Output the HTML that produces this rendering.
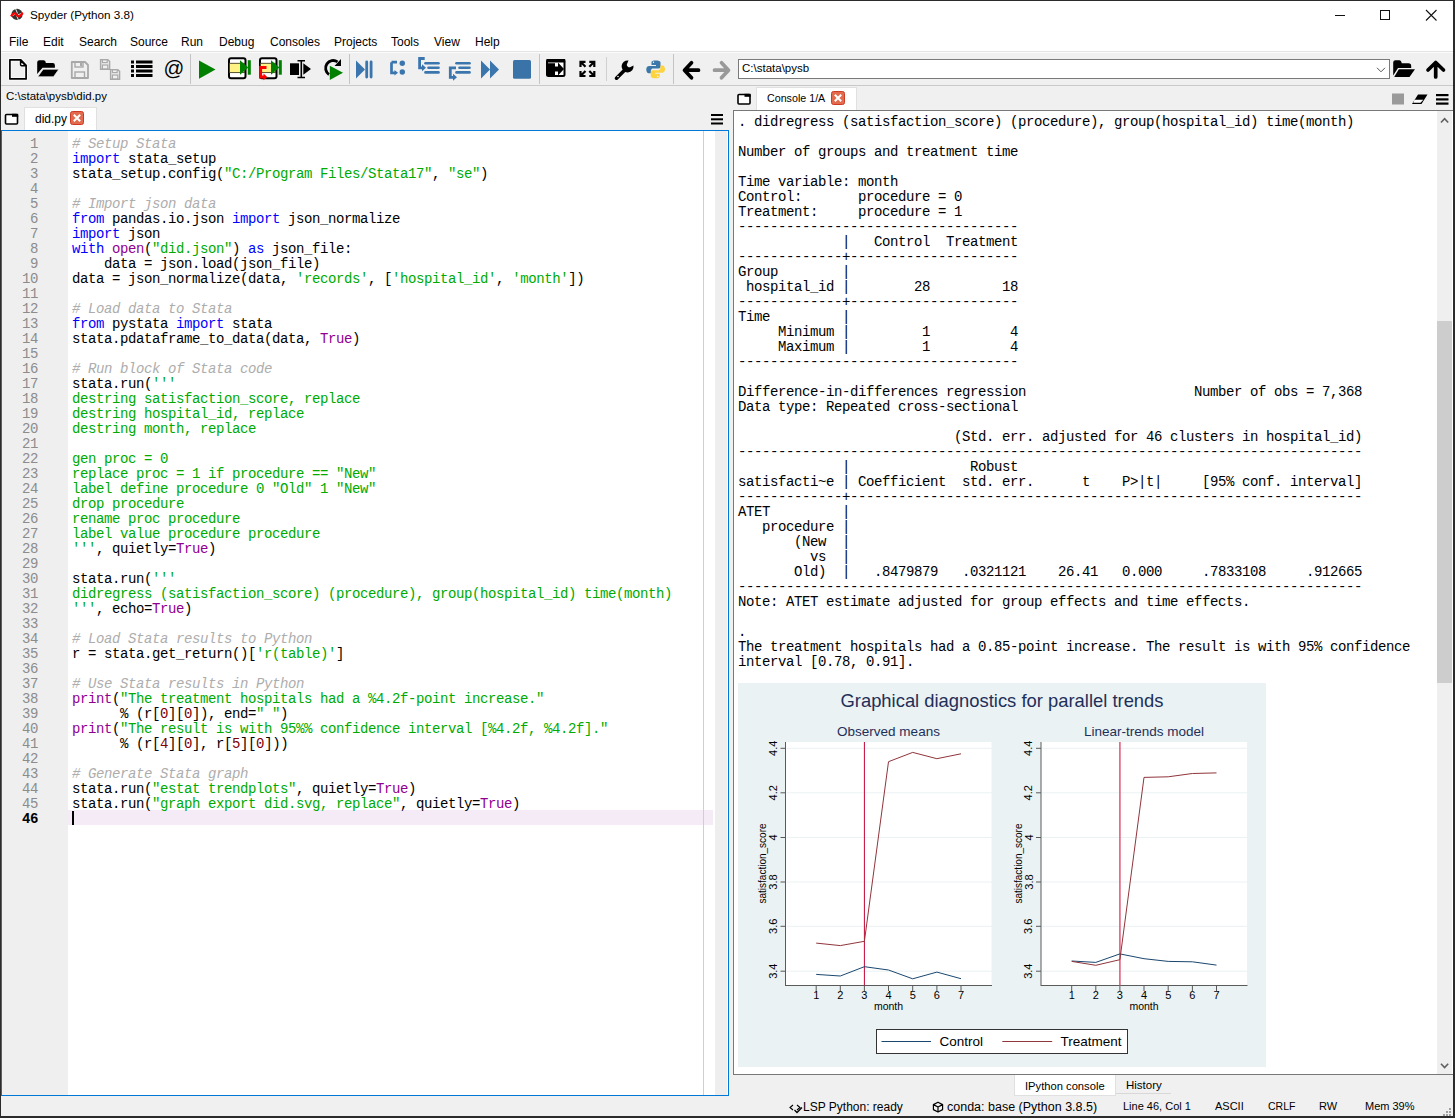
<!DOCTYPE html>
<html><head><meta charset="utf-8"><style>
html,body{margin:0;padding:0;}
body{width:1455px;height:1118px;overflow:hidden;background:#f0f0f0;font-family:"Liberation Sans",sans-serif;}
#win{position:absolute;left:0;top:0;width:1455px;height:1118px;background:#f0f0f0;}
.a{position:absolute;}
.t{position:absolute;white-space:pre;font-family:"Liberation Sans",sans-serif;color:#000;}
pre{margin:0;}
#titlebar{left:0;top:0;width:1455px;height:30px;background:#fff;}
#menubar{left:0;top:30px;width:1455px;height:22px;background:#fff;}
#toolbar{left:0;top:51px;width:1455px;height:34px;background:#f0f0f0;border-top:1px solid #e3e3e3;box-shadow:inset 0 1px 0 #fbfbfb;}
#tbline{left:0;top:85px;width:1455px;height:1px;background:#c9c9c9;}
.sep{position:absolute;width:1px;background:#c8c8c8;}
#editor{left:1px;top:130px;width:726px;height:964px;border:1px solid #0078d7;background:#fff;}
#gutbg{left:2px;top:131px;width:66px;height:964px;background:#efefef;}
#edge{left:703px;top:131px;width:1px;height:964px;background:#cfcfcf;}
#escroll{left:715px;top:131px;width:12px;height:964px;background:#eeeeee;}
#curline{position:absolute;left:68px;top:810px;width:645px;height:15px;background:#f5ebf7;}
#gut{position:absolute;left:2px;top:137px;width:36px;text-align:right;font-family:"Liberation Mono",monospace;font-size:14px;letter-spacing:-0.4px;line-height:15px;color:#8c8c8c;}
#gut b{color:#000;font-weight:bold;}
#code{position:absolute;left:72px;top:137px;font-family:"Liberation Mono",monospace;font-size:14px;letter-spacing:-0.4px;line-height:15px;color:#000;}
#code .k{color:#0000ff;}
#code .b{color:#900090;}
#code .s{color:#00aa00;}
#code .c{color:#adadad;font-style:italic;}
#code .n{color:#800000;}
#cursor{left:72px;top:811px;width:2px;height:14px;background:#000;}
#conbox{left:733px;top:110px;width:719px;height:963px;border:1px solid #787878;background:#fff;}
#con{position:absolute;left:738px;top:115px;font-family:"Liberation Mono",monospace;font-size:14px;letter-spacing:-0.4px;line-height:15px;color:#000;}
#cscroll{left:1437px;top:111px;width:15px;height:963px;background:#efefef;}
#cthumb{left:1437px;top:321px;width:15px;height:362px;background:#cdcdcd;}
#graph{position:absolute;left:738px;top:683px;width:528px;height:384px;}
#statusbar{left:0;top:1096px;width:1455px;height:21px;background:#f0f0f0;}
#frameL{left:0;top:0;width:1px;height:1118px;background:#2b2b2b;}
#frameT{left:0;top:0;width:1455px;height:1px;background:#2b2b2b;}
#frameR{left:1453px;top:0;width:2px;height:1118px;background:#2b2b2b;}
#frameB{left:0;top:1116px;width:1455px;height:2px;background:#2b2b2b;}

</style></head><body>
<div id="win">
<div class="a" id="titlebar"></div>
<div class="t" style="left:30px;top:8px;font-size:11.7px;">Spyder (Python 3.8)</div>
<div class="a" id="menubar"></div>
<div class="t" style="left:9px;top:35px;font-size:12px;">File</div>
<div class="t" style="left:43px;top:35px;font-size:12px;">Edit</div>
<div class="t" style="left:79px;top:35px;font-size:12px;">Search</div>
<div class="t" style="left:130px;top:35px;font-size:12px;">Source</div>
<div class="t" style="left:181px;top:35px;font-size:12px;">Run</div>
<div class="t" style="left:219px;top:35px;font-size:12px;">Debug</div>
<div class="t" style="left:270px;top:35px;font-size:12px;">Consoles</div>
<div class="t" style="left:334px;top:35px;font-size:12px;">Projects</div>
<div class="t" style="left:391px;top:35px;font-size:12px;">Tools</div>
<div class="t" style="left:434px;top:35px;font-size:12px;">View</div>
<div class="t" style="left:475px;top:35px;font-size:12px;">Help</div>
<div class="a" id="toolbar"></div>
<div class="a" id="tbline"></div>
<div class="a" id="editor"></div>
<div class="a" id="gutbg"></div>
<div id="curline"></div>
<div class="a" id="edge"></div>
<div class="a" id="escroll"></div>
<div class="a" id="conbox"></div>
<div class="a" id="cscroll"></div>
<div class="a" id="cthumb"></div>
<div class="a" id="statusbar"></div>
<div class="t" style="left:6px;top:90px;font-size:11.5px;">C:\stata\pysb\did.py</div>
<div class="a" style="left:24px;top:107px;width:73px;height:23px;background:#fff;border:1px solid #e0e0e0;border-bottom:none;box-sizing:border-box;"></div>
<div class="t" style="left:35px;top:112px;font-size:12px;">did.py</div>
<div class="a" style="left:756px;top:87px;width:101px;height:23px;background:#fff;border:1px solid #e0e0e0;border-bottom:none;box-sizing:border-box;"></div>
<div class="t" style="left:767px;top:92px;font-size:10.7px;">Console 1/A</div>
<div class="a" style="left:1014px;top:1075px;width:102px;height:21px;background:#fff;border:1px solid #e0e0e0;border-top:none;box-sizing:border-box;"></div>
<div class="t" style="left:1025px;top:1080px;font-size:11.2px;">IPython console</div>
<div class="t" style="left:1126px;top:1079px;font-size:11.5px;">History</div>
<div class="a" style="left:1116px;top:1093px;width:55px;height:1px;background:#d8d8d8;"></div>
<div class="t" style="left:803px;top:1100px;font-size:12px;">LSP Python: ready</div>
<div class="t" style="left:947px;top:1100px;font-size:12.5px;">conda: base (Python 3.8.5)</div>
<div class="t" style="left:1123px;top:1100px;font-size:11px;">Line 46, Col 1</div>
<div class="t" style="left:1215px;top:1100px;font-size:11px;">ASCII</div>
<div class="t" style="left:1268px;top:1100px;font-size:10.5px;">CRLF</div>
<div class="t" style="left:1319px;top:1100px;font-size:11px;">RW</div>
<div class="t" style="left:1365px;top:1100px;font-size:11px;">Mem 39%</div>
<svg class="a" style="left:0;top:0" width="1455" height="130">
<!-- spyder logo -->
<g transform="translate(17,14.4)">
<circle r="5.6" fill="#333"/>
<path d="M-1.5,-5.8 L0.5,-1 M5.5,-1.5 L1,0.5 M1.5,5.8 L-0.5,1 M-5.5,1.5 L-1,-0.5" stroke="#fff" stroke-width="0.9"/>
<path d="M-6,2 C-4,-1 -2.5,-2 -1,0 C0.5,2 2,2.5 3.5,1 C4.5,0 5,-1 6,-1.5" stroke="#f00" stroke-width="2.2" fill="none"/>
</g>
<!-- window controls -->
<line x1="1335" y1="15.5" x2="1345" y2="15.5" stroke="#111" stroke-width="1"/>
<rect x="1380.5" y="10.5" width="9" height="9" fill="none" stroke="#111" stroke-width="1"/>
<path d="M1426,10 L1436.5,20.5 M1436.5,10 L1426,20.5" stroke="#111" stroke-width="1.1"/>
<!-- separators -->
<rect x="190" y="54" width="1" height="30" fill="#c4c4c4"/>
<rect x="349" y="54" width="1" height="30" fill="#c4c4c4"/>
<rect x="539" y="54" width="1" height="30" fill="#c4c4c4"/>
<rect x="606" y="57" width="1" height="24" fill="#d0d0d0"/>
<rect x="673" y="54" width="1" height="30" fill="#c4c4c4"/>
<!-- 1 new file -->
<path d="M9.9,59.8 H20.8 L26.1,65.3 V78.9 H9.9 Z" fill="none" stroke="#fff" stroke-width="3.4" stroke-linejoin="round" opacity="0.8"/>
<path d="M9.9,59.8 H20.8 L26.1,65.3 V78.9 H9.9 Z" fill="none" stroke="#000" stroke-width="1.7" stroke-linejoin="round"/>
<path d="M20.6,60.5 V64.8 Q20.6,65.8 21.6,65.8 H25.6 Z" fill="#fff" stroke="#000" stroke-width="1.5" stroke-linejoin="round"/>
<!-- 2 open folder -->
<path d="M37.2,62.2 Q37.2,60.2 39.5,60.2 H43.5 Q45.6,60.2 45.8,63 H52.8 Q54.9,63 54.9,65.2 V67.8 H42.5 L37.2,74 Z" fill="#000"/>
<path d="M43.2,69.3 H58.8 L53.5,76.7 H37.8 Z" fill="#000" stroke="#fff" stroke-width="0.6"/>
<!-- 3 save (disabled) -->
<path d="M71.8,62 H85 L88,65 V78 H71.8 Z" fill="none" stroke="#a9a9a9" stroke-width="1.8" stroke-linejoin="round"/>
<rect x="75" y="62" width="8" height="5" fill="none" stroke="#a9a9a9" stroke-width="1.4"/>
<rect x="80" y="63" width="2" height="3" fill="#a9a9a9"/>
<rect x="75" y="72" width="9.5" height="6" fill="none" stroke="#a9a9a9" stroke-width="1.4"/>
<!-- 4 save all -->
<g transform="translate(100,59) scale(0.6)">
<path d="M1,1 H13 L16,4 V17 H1 Z" fill="none" stroke="#a9a9a9" stroke-width="2.4"/>
<rect x="4" y="1" width="8" height="5" fill="none" stroke="#a9a9a9" stroke-width="2"/>
<rect x="4" y="10" width="9" height="7" fill="none" stroke="#a9a9a9" stroke-width="2"/>
</g>
<g transform="translate(110,69) scale(0.6)">
<path d="M1,1 H13 L16,4 V17 H1 Z" fill="#f0f0f0" stroke="#a9a9a9" stroke-width="2.4"/>
<rect x="4" y="1" width="8" height="5" fill="none" stroke="#a9a9a9" stroke-width="2"/>
<rect x="4" y="10" width="9" height="7" fill="none" stroke="#a9a9a9" stroke-width="2"/>
</g>
<!-- 5 list -->
<g fill="#000">
<rect x="131" y="60.5" width="3" height="3"/><rect x="136" y="60.5" width="16.5" height="3"/>
<rect x="131" y="65" width="3" height="3"/><rect x="136" y="65" width="16.5" height="3"/>
<rect x="131" y="69.5" width="3" height="3"/><rect x="136" y="69.5" width="16.5" height="3"/>
<rect x="131" y="74" width="3" height="3"/><rect x="136" y="74" width="16.5" height="3"/>
</g>
<!-- 6 @ -->
<text x="163.5" y="75" font-family="Liberation Sans" font-size="20.5" fill="#000">@</text>
<!-- 7 play -->
<path d="M199,60.5 L215.5,69.5 L199,78.8 Z" fill="#008000"/>
<!-- 8 run cell -->
<rect x="229" y="58.3" width="16.5" height="20" rx="2" fill="#fff" stroke="#000" stroke-width="2"/>
<rect x="229.5" y="63.3" width="15" height="9.3" fill="#fff385" stroke="#463c20" stroke-width="0.9"/>
<path d="M240,60.3 L248.3,67.5 L240,74.7 Z" fill="#008000"/>
<rect x="247.8" y="60.2" width="3" height="14.5" fill="#008000"/>
<!-- 9 run cell advance -->
<rect x="260" y="58.3" width="16.5" height="20" rx="2" fill="#fff" stroke="#000" stroke-width="2"/>
<rect x="260.5" y="63.3" width="15" height="9.3" fill="#fff385" stroke="#463c20" stroke-width="0.9"/>
<path d="M271,60.3 L279.3,67.5 L271,74.7 Z" fill="#008000"/>
<rect x="278.8" y="60.2" width="3" height="14.5" fill="#008000"/>
<path d="M266.5,67.5 H260.6 V77 H264" fill="none" stroke="#ff0000" stroke-width="3"/>
<path d="M263.5,73.5 L267.3,77 L263.5,80.3 Z" fill="#ff0000"/>
<!-- 10 run selection -->
<rect x="290" y="63.3" width="9" height="11.7" fill="#000"/>
<path d="M297.5,60.8 H305 M301.3,60.8 V77.5 M297.5,77.5 H305" stroke="#000" stroke-width="1.6" fill="none"/>
<path d="M303.3,63.3 L311,69 L303.3,74.7 Z" fill="#000"/>
<!-- 11 re-run -->
<path d="M337.5,61.8 A7.2,7.2 0 1 0 329,74.5" fill="none" stroke="#000" stroke-width="2.8"/>
<path d="M341,59 L341,66 L334.5,66 Z" fill="#000"/>
<path d="M329.8,65.7 L343,72.8 L329.8,80 Z" fill="#008000"/>
<!-- 12 debug -->
<g fill="#3a75ae">
<path d="M356,60.5 L365,69.5 L356,78.5 Z"/>
<rect x="365.3" y="60.5" width="2.8" height="18" rx="1.4"/>
<rect x="369.7" y="60.5" width="2.8" height="18" rx="1.4"/>
</g>
<!-- 13 debug step -->
<g fill="#3a75ae" stroke="none">
<path d="M391.5,62.2 H397 M391.5,62.2 V72.8 H395" stroke="#3a75ae" stroke-width="2.7" fill="none"/>
<path d="M394.5,70 L398,72.8 L394.5,75.6 Z"/>
<circle cx="402.3" cy="63.3" r="2.7"/>
<circle cx="402.3" cy="72" r="2.7"/>
</g>
<!-- 14 step into -->
<g stroke="#3a75ae" fill="none" stroke-linecap="round">
<path d="M424.7,58.5 H419.6 V67.8 H423" stroke-width="2.8" stroke-linecap="butt"/>
<line x1="425.5" y1="63.2" x2="438.5" y2="63.2" stroke-width="2.6"/>
<line x1="428.5" y1="67.8" x2="438.5" y2="67.8" stroke-width="2.6"/>
<line x1="425.5" y1="72.4" x2="438.5" y2="72.4" stroke-width="2.6"/>
</g>
<path d="M422,64.3 L426,67.8 L422,71.3 Z" fill="#3a75ae"/>
<!-- 15 step return -->
<g stroke="#3a75ae" fill="none" stroke-linecap="round">
<path d="M456,67.8 H450.3 V77.3 H454" stroke-width="2.8" stroke-linecap="butt"/>
<line x1="456.5" y1="63.2" x2="469.5" y2="63.2" stroke-width="2.6"/>
<line x1="459.5" y1="67.8" x2="469.5" y2="67.8" stroke-width="2.6"/>
<line x1="456.5" y1="72.4" x2="469.5" y2="72.4" stroke-width="2.6"/>
</g>
<path d="M453,73.7 L457,77.3 L453,80.8 Z" fill="#3a75ae"/>
<!-- 16 continue -->
<path d="M481,60.5 L490,69.5 L481,78.5 Z M490,60.5 L499,69.5 L490,78.5 Z" fill="#3a75ae"/>
<!-- 17 stop -->
<rect x="513" y="60" width="18" height="18.7" rx="1.5" fill="#3a73a8"/>
<!-- 18 maximize pane -->
<rect x="547" y="60" width="17.5" height="16" rx="1.5" fill="#fff" stroke="#000" stroke-width="2"/>
<rect x="546.5" y="59" width="18.7" height="3.5" fill="#000"/>
<path d="M548,63.3 H555 V66.5 H558 V62.5 L564,69 L558,75.5 V71.5 H555 V75 H548 Z" fill="#000"/>
<!-- 19 fullscreen -->
<g stroke="#000" stroke-width="2.2" fill="none">
<path d="M580.5,67 V61.8 H585.5 M580.5,61.8 L585.5,66.8"/>
<path d="M594.3,67 V61.8 H589.3 M594.3,61.8 L589.3,66.8"/>
<path d="M580.5,71 V76 H585.5 M580.5,76 L585.5,71"/>
<path d="M594.3,71 V76 H589.3 M594.3,76 L589.3,71"/>
</g>
<!-- 20 wrench -->
<path d="M616.5,78.2 L626.5,68.2" stroke="#000" stroke-width="3.6" stroke-linecap="round"/>
<path d="M633.5,65.5 A6,6 0 1 1 628.5,60.5 L626.8,64.5 A2.8,2.8 0 0 0 630,67.3 Z" fill="#000"/>
<circle cx="618" cy="76.5" r="0.8" fill="#fff"/>
<!-- 21 python -->
<path d="M655.5,60.5 C651,60.5 651.5,62.5 651.5,62.5 V65 H656 V66 H649 C646.5,66 646.3,69 646.3,69.5 C646.3,73 648.5,73.3 649,73.3 H650.8 V70.8 C650.8,69 652.5,68.5 653,68.5 H658.5 C660,68.5 660.5,67.5 660.5,66.5 V62.5 C660.5,61 658.5,60.5 655.5,60.5 Z" fill="#3b77a8"/>
<path d="M655.8,78.2 C660.3,78.2 659.8,76.2 659.8,76.2 V73.7 H655.3 V72.7 H662.3 C664.8,72.7 665,69.7 665,69.2 C665,65.7 662.8,65.4 662.3,65.4 H660.5 V67.9 C660.5,69.7 658.8,70.2 658.3,70.2 H652.8 C651.3,70.2 650.8,71.2 650.8,72.2 V76.2 C650.8,77.7 652.8,78.2 655.8,78.2 Z" fill="#fdd33f"/>
<circle cx="653.5" cy="62.3" r="0.7" fill="#fff"/><circle cx="657.8" cy="76.4" r="0.7" fill="#fff"/>
<!-- 22 back -->
<g stroke="#000" stroke-width="3.7" fill="none" stroke-linecap="round" stroke-linejoin="round">
<path d="M691.5,62.8 L684.5,70.2 L691.5,77.8 M685,70.2 H698.5"/>
</g>
<!-- 23 forward -->
<g stroke="#999" stroke-width="3.7" fill="none" stroke-linecap="round" stroke-linejoin="round">
<path d="M721.5,62.8 L728.5,70.2 L721.5,77.8 M728,70.2 H714.5"/>
</g>
<!-- combobox -->
<rect x="738.5" y="59.5" width="651" height="19" fill="#fff" stroke="#7a7a7a" stroke-width="1"/>
<path d="M1377,67.8 L1381,71.8 L1385,67.8" stroke="#555" stroke-width="1" fill="none"/>
<!-- 24 folder -->
<path d="M1393.2,62.5 Q1393.2,60.3 1395.5,60.3 H1399.5 Q1401.3,60.3 1401.8,63.2 H1408.5 Q1411.2,63.2 1411.2,66 V68 H1398 L1393.2,75.5 Z" fill="#000"/>
<path d="M1398.8,69.3 H1415 L1409.5,76.9 H1394.2 Z" fill="#000"/>
<!-- 25 up -->
<g stroke="#000" stroke-width="3.7" fill="none" stroke-linecap="round" stroke-linejoin="round">
<path d="M1428,70 L1435.7,62.5 L1443.5,70 M1435.7,63 V77"/>
</g>
<!-- editor tab bar icons -->
<rect x="5.5" y="114.5" width="12" height="9.5" rx="1" fill="#fff" stroke="#000" stroke-width="1.6"/>
<rect x="12" y="113.8" width="6.2" height="3" fill="#000"/>
<!-- close icons -->
<rect x="70.5" y="111.5" width="13" height="13" rx="2" fill="#e36a4d" stroke="#cc3b24" stroke-width="1"/>
<path d="M73.8,114.8 L80.2,121.2 M80.2,114.8 L73.8,121.2" stroke="#fff" stroke-width="2"/>
<!-- hamburger editor -->
<g fill="#000"><rect x="711" y="114" width="12" height="2"/><rect x="711" y="118.3" width="12" height="2"/><rect x="711" y="122.5" width="12" height="2"/></g>
<!-- console header -->
<rect x="738" y="94.5" width="12" height="9.5" rx="1" fill="#fff" stroke="#000" stroke-width="1.6"/>
<rect x="744.5" y="93.8" width="6.2" height="3" fill="#000"/>
<rect x="831.5" y="91.5" width="13" height="13" rx="2" fill="#e36a4d" stroke="#cc3b24" stroke-width="1"/>
<path d="M834.8,94.8 L841.2,101.2 M841.2,94.8 L834.8,101.2" stroke="#fff" stroke-width="2"/>
<rect x="1392" y="93.5" width="12" height="11" fill="#9a9a9a"/>
<path d="M1418,94.5 H1427.5 L1421.5,104 H1412 Z" fill="#000"/>
<path d="M1414.5,99.8 H1423.3 L1420.5,102.8 H1413.2 Z" fill="#fff"/>
<g fill="#000"><rect x="1436" y="94" width="12.5" height="2.2"/><rect x="1436" y="98.3" width="12.5" height="2.2"/><rect x="1436" y="102.5" width="12.5" height="2.2"/></g>
</svg>

<svg class="a" style="left:0;top:1060px" width="1455" height="58">
<path d="M793,45 L790,47.5 L793,50 M797,45 L800,47.5 L797,50" stroke="#000" stroke-width="1.1" fill="none"/>
<path d="M794.5,50 L797,52.5 L802,47.5" stroke="#000" stroke-width="1.3" fill="none"/>
<path d="M938,42.2 L942.6,44.6 V49.6 L938,52 L933.4,49.6 V44.6 Z M933.4,44.6 L938,47 L942.6,44.6 M938,47 V52" stroke="#000" stroke-width="1.2" fill="none" stroke-linejoin="round"/>
<g fill="#a0a0a0"><rect x="1443" y="54" width="2" height="2"/><rect x="1446" y="54" width="2" height="2"/><rect x="1449" y="54" width="2" height="2"/><rect x="1446" y="51" width="2" height="2"/><rect x="1449" y="51" width="2" height="2"/><rect x="1449" y="48" width="2" height="2"/></g>
<path d="M1441,3.8 L1444.6,7.6 L1448.2,3.8" stroke="#606060" stroke-width="1.6" fill="none"/>
</svg>
<svg class="a" style="left:1437px;top:111px" width="15" height="20"><path d="M4,11.5 L7.6,7.7 L11.2,11.5" stroke="#606060" stroke-width="1.6" fill="none"/></svg>

<div class="t" style="left:742px;top:62px;font-size:11.5px;">C:\stata\pysb</div>

<div class="a" id="frameL"></div><div class="a" id="frameT"></div><div class="a" id="frameR"></div><div class="a" id="frameB"></div>

<pre id="gut">1
2
3
4
5
6
7
8
9
10
11
12
13
14
15
16
17
18
19
20
21
22
23
24
25
26
27
28
29
30
31
32
33
34
35
36
37
38
39
40
41
42
43
44
45
<b>46</b></pre>
<div class="a" id="cursor"></div>
<pre id="code"><span class="c"># Setup Stata</span>
<span class="k">import</span> stata_setup
stata_setup.config(<span class="s">&quot;C:/Program Files/Stata17&quot;</span>, <span class="s">&quot;se&quot;</span>)

<span class="c"># Import json data</span>
<span class="k">from</span> pandas.io.json <span class="k">import</span> json_normalize
<span class="k">import</span> json
<span class="k">with</span> <span class="b">open</span>(<span class="s">&quot;did.json&quot;</span>) <span class="k">as</span> json_file:
    data = json.load(json_file)
data = json_normalize(data, <span class="s">&#x27;records&#x27;</span>, [<span class="s">&#x27;hospital_id&#x27;</span>, <span class="s">&#x27;month&#x27;</span>])

<span class="c"># Load data to Stata</span>
<span class="k">from</span> pystata <span class="k">import</span> stata
stata.pdataframe_to_data(data, <span class="b">True</span>)

<span class="c"># Run block of Stata code</span>
stata.run(<span class="s">&#x27;&#x27;&#x27;</span>
<span class="s">destring satisfaction_score, replace</span>
<span class="s">destring hospital_id, replace</span>
<span class="s">destring month, replace</span>
<span class="s"></span>
<span class="s">gen proc = 0</span>
<span class="s">replace proc = 1 if procedure == &quot;New&quot;</span>
<span class="s">label define procedure 0 &quot;Old&quot; 1 &quot;New&quot;</span>
<span class="s">drop procedure</span>
<span class="s">rename proc procedure</span>
<span class="s">label value procedure procedure</span>
<span class="s">&#x27;&#x27;&#x27;</span>, quietly=<span class="b">True</span>)

stata.run(<span class="s">&#x27;&#x27;&#x27;</span>
<span class="s">didregress (satisfaction_score) (procedure), group(hospital_id) time(month)</span>
<span class="s">&#x27;&#x27;&#x27;</span>, echo=<span class="b">True</span>)

<span class="c"># Load Stata results to Python</span>
r = stata.get_return()[<span class="s">&#x27;r(table)&#x27;</span>]

<span class="c"># Use Stata results in Python</span>
<span class="b">print</span>(<span class="s">&quot;The treatment hospitals had a %4.2f-point increase.&quot;</span>
      % (r[<span class="n">0</span>][<span class="n">0</span>]), end=<span class="s">&quot; &quot;</span>)
<span class="b">print</span>(<span class="s">&quot;The result is with 95%% confidence interval [%4.2f, %4.2f].&quot;</span>
      % (r[<span class="n">4</span>][<span class="n">0</span>], r[<span class="n">5</span>][<span class="n">0</span>]))

<span class="c"># Generate Stata graph</span>
stata.run(<span class="s">&quot;estat trendplots&quot;</span>, quietly=<span class="b">True</span>)
stata.run(<span class="s">&quot;graph export did.svg, replace&quot;</span>, quietly=<span class="b">True</span>)
</pre>
<pre id="con">. didregress (satisfaction_score) (procedure), group(hospital_id) time(month)

Number of groups and treatment time

Time variable: month
Control:       procedure = 0
Treatment:     procedure = 1
-----------------------------------
             |   Control  Treatment
-------------+---------------------
Group        |
 hospital_id |        28         18
-------------+---------------------
Time         |
     Minimum |         1          4
     Maximum |         1          4
-----------------------------------

Difference-in-differences regression                     Number of obs = 7,368
Data type: Repeated cross-sectional

                           (Std. err. adjusted for 46 clusters in hospital_id)
------------------------------------------------------------------------------
             |               Robust
satisfacti~e | Coefficient  std. err.      t    P&gt;|t|     [95% conf. interval]
-------------+----------------------------------------------------------------
ATET         |
   procedure |
       (New  |
         vs  |
       Old)  |   .8479879   .0321121    26.41   0.000     .7833108     .912665
------------------------------------------------------------------------------
Note: ATET estimate adjusted for group effects and time effects.

.
The treatment hospitals had a 0.85-point increase. The result is with 95% confidence
interval [0.78, 0.91].</pre>
<div id="graph"><svg width="528" height="384" font-family="Liberation Sans, sans-serif">
<rect width="528" height="384" fill="#eaf2f3"/>
<text x="264" y="23.5" font-size="18.4" fill="#1e2f5a" text-anchor="middle">Graphical diagnostics for parallel trends</text>
<text x="150.5" y="53" font-size="13.5" fill="#1e2f5a" text-anchor="middle">Observed means</text>
<rect x="47.5" y="59" width="206" height="243.5" fill="#fff"/>
<line x1="48.5" x2="254" y1="65.3" y2="65.3" stroke="#eaf2f3" stroke-width="1"/>
<line x1="42.5" x2="47.5" y1="65.3" y2="65.3" stroke="#595959" stroke-width="1"/>
<text x="39" y="65.3" font-size="11" fill="#000" text-anchor="middle" transform="rotate(-90 39 65.3)">4.4</text>
<line x1="48.5" x2="254" y1="109.8" y2="109.8" stroke="#eaf2f3" stroke-width="1"/>
<line x1="42.5" x2="47.5" y1="109.8" y2="109.8" stroke="#595959" stroke-width="1"/>
<text x="39" y="109.8" font-size="11" fill="#000" text-anchor="middle" transform="rotate(-90 39 109.8)">4.2</text>
<line x1="48.5" x2="254" y1="154.5" y2="154.5" stroke="#eaf2f3" stroke-width="1"/>
<line x1="42.5" x2="47.5" y1="154.5" y2="154.5" stroke="#595959" stroke-width="1"/>
<text x="39" y="154.5" font-size="11" fill="#000" text-anchor="middle" transform="rotate(-90 39 154.5)">4</text>
<line x1="48.5" x2="254" y1="199.0" y2="199.0" stroke="#eaf2f3" stroke-width="1"/>
<line x1="42.5" x2="47.5" y1="199.0" y2="199.0" stroke="#595959" stroke-width="1"/>
<text x="39" y="199.0" font-size="11" fill="#000" text-anchor="middle" transform="rotate(-90 39 199.0)">3.8</text>
<line x1="48.5" x2="254" y1="243.3" y2="243.3" stroke="#eaf2f3" stroke-width="1"/>
<line x1="42.5" x2="47.5" y1="243.3" y2="243.3" stroke="#595959" stroke-width="1"/>
<text x="39" y="243.3" font-size="11" fill="#000" text-anchor="middle" transform="rotate(-90 39 243.3)">3.6</text>
<line x1="48.5" x2="254" y1="288.2" y2="288.2" stroke="#eaf2f3" stroke-width="1"/>
<line x1="42.5" x2="47.5" y1="288.2" y2="288.2" stroke="#595959" stroke-width="1"/>
<text x="39" y="288.2" font-size="11" fill="#000" text-anchor="middle" transform="rotate(-90 39 288.2)">3.4</text>
<text x="28" y="180.5" font-size="10" fill="#000" text-anchor="middle" transform="rotate(-90 28 180.5)">satisfaction_score</text>
<line x1="47.5" x2="47.5" y1="59" y2="303" stroke="#5a5a5a" stroke-width="1"/>
<line x1="47.5" x2="254" y1="302.5" y2="302.5" stroke="#5a5a5a" stroke-width="1"/>
<line x1="78.2" x2="78.2" y1="302.5" y2="308" stroke="#595959" stroke-width="1"/>
<text x="78.2" y="315.5" font-size="11" fill="#000" text-anchor="middle">1</text>
<line x1="102.3" x2="102.3" y1="302.5" y2="308" stroke="#595959" stroke-width="1"/>
<text x="102.3" y="315.5" font-size="11" fill="#000" text-anchor="middle">2</text>
<line x1="126.4" x2="126.4" y1="302.5" y2="308" stroke="#595959" stroke-width="1"/>
<text x="126.4" y="315.5" font-size="11" fill="#000" text-anchor="middle">3</text>
<line x1="150.5" x2="150.5" y1="302.5" y2="308" stroke="#595959" stroke-width="1"/>
<text x="150.5" y="315.5" font-size="11" fill="#000" text-anchor="middle">4</text>
<line x1="174.7" x2="174.7" y1="302.5" y2="308" stroke="#595959" stroke-width="1"/>
<text x="174.7" y="315.5" font-size="11" fill="#000" text-anchor="middle">5</text>
<line x1="198.9" x2="198.9" y1="302.5" y2="308" stroke="#595959" stroke-width="1"/>
<text x="198.9" y="315.5" font-size="11" fill="#000" text-anchor="middle">6</text>
<line x1="223.0" x2="223.0" y1="302.5" y2="308" stroke="#595959" stroke-width="1"/>
<text x="223.0" y="315.5" font-size="11" fill="#000" text-anchor="middle">7</text>
<text x="150.5" y="326.5" font-size="10.5" fill="#000" text-anchor="middle">month</text>
<line x1="126.4" x2="126.4" y1="59" y2="302.5" stroke="#c10534" stroke-width="1"/>
<polyline points="78.2,291.4 102.3,293.0 126.4,283.7 150.5,287.0 174.7,295.8 198.9,289.1 223.0,295.7" fill="none" stroke="#1a476f" stroke-width="1"/>
<polyline points="78.2,260.1 102.3,262.6 126.4,258.3 150.5,78.7 174.7,69.4 198.9,75.7 223.0,70.8" fill="none" stroke="#90353b" stroke-width="1"/>
<text x="406.0" y="53" font-size="13.5" fill="#1e2f5a" text-anchor="middle">Linear-trends model</text>
<rect x="303.0" y="59" width="206" height="243.5" fill="#fff"/>
<line x1="304.0" x2="509.5" y1="65.3" y2="65.3" stroke="#eaf2f3" stroke-width="1"/>
<line x1="298.0" x2="303.0" y1="65.3" y2="65.3" stroke="#595959" stroke-width="1"/>
<text x="294.5" y="65.3" font-size="11" fill="#000" text-anchor="middle" transform="rotate(-90 294.5 65.3)">4.4</text>
<line x1="304.0" x2="509.5" y1="109.8" y2="109.8" stroke="#eaf2f3" stroke-width="1"/>
<line x1="298.0" x2="303.0" y1="109.8" y2="109.8" stroke="#595959" stroke-width="1"/>
<text x="294.5" y="109.8" font-size="11" fill="#000" text-anchor="middle" transform="rotate(-90 294.5 109.8)">4.2</text>
<line x1="304.0" x2="509.5" y1="154.5" y2="154.5" stroke="#eaf2f3" stroke-width="1"/>
<line x1="298.0" x2="303.0" y1="154.5" y2="154.5" stroke="#595959" stroke-width="1"/>
<text x="294.5" y="154.5" font-size="11" fill="#000" text-anchor="middle" transform="rotate(-90 294.5 154.5)">4</text>
<line x1="304.0" x2="509.5" y1="199.0" y2="199.0" stroke="#eaf2f3" stroke-width="1"/>
<line x1="298.0" x2="303.0" y1="199.0" y2="199.0" stroke="#595959" stroke-width="1"/>
<text x="294.5" y="199.0" font-size="11" fill="#000" text-anchor="middle" transform="rotate(-90 294.5 199.0)">3.8</text>
<line x1="304.0" x2="509.5" y1="243.3" y2="243.3" stroke="#eaf2f3" stroke-width="1"/>
<line x1="298.0" x2="303.0" y1="243.3" y2="243.3" stroke="#595959" stroke-width="1"/>
<text x="294.5" y="243.3" font-size="11" fill="#000" text-anchor="middle" transform="rotate(-90 294.5 243.3)">3.6</text>
<line x1="304.0" x2="509.5" y1="288.2" y2="288.2" stroke="#eaf2f3" stroke-width="1"/>
<line x1="298.0" x2="303.0" y1="288.2" y2="288.2" stroke="#595959" stroke-width="1"/>
<text x="294.5" y="288.2" font-size="11" fill="#000" text-anchor="middle" transform="rotate(-90 294.5 288.2)">3.4</text>
<text x="283.5" y="180.5" font-size="10" fill="#000" text-anchor="middle" transform="rotate(-90 283.5 180.5)">satisfaction_score</text>
<line x1="303.0" x2="303.0" y1="59" y2="303" stroke="#5a5a5a" stroke-width="1"/>
<line x1="303.0" x2="509.5" y1="302.5" y2="302.5" stroke="#5a5a5a" stroke-width="1"/>
<line x1="333.7" x2="333.7" y1="302.5" y2="308" stroke="#595959" stroke-width="1"/>
<text x="333.7" y="315.5" font-size="11" fill="#000" text-anchor="middle">1</text>
<line x1="357.8" x2="357.8" y1="302.5" y2="308" stroke="#595959" stroke-width="1"/>
<text x="357.8" y="315.5" font-size="11" fill="#000" text-anchor="middle">2</text>
<line x1="381.9" x2="381.9" y1="302.5" y2="308" stroke="#595959" stroke-width="1"/>
<text x="381.9" y="315.5" font-size="11" fill="#000" text-anchor="middle">3</text>
<line x1="406.0" x2="406.0" y1="302.5" y2="308" stroke="#595959" stroke-width="1"/>
<text x="406.0" y="315.5" font-size="11" fill="#000" text-anchor="middle">4</text>
<line x1="430.2" x2="430.2" y1="302.5" y2="308" stroke="#595959" stroke-width="1"/>
<text x="430.2" y="315.5" font-size="11" fill="#000" text-anchor="middle">5</text>
<line x1="454.4" x2="454.4" y1="302.5" y2="308" stroke="#595959" stroke-width="1"/>
<text x="454.4" y="315.5" font-size="11" fill="#000" text-anchor="middle">6</text>
<line x1="478.5" x2="478.5" y1="302.5" y2="308" stroke="#595959" stroke-width="1"/>
<text x="478.5" y="315.5" font-size="11" fill="#000" text-anchor="middle">7</text>
<text x="406.0" y="326.5" font-size="10.5" fill="#000" text-anchor="middle">month</text>
<line x1="381.9" x2="381.9" y1="59" y2="302.5" stroke="#e0607e" stroke-width="1.6"/>
<polyline points="333.7,278.0 357.8,279.4 381.9,270.9 406.0,275.7 430.2,278.4 454.4,278.8 478.5,282.1" fill="none" stroke="#1a476f" stroke-width="1"/>
<polyline points="333.7,278.4 357.8,282.3 381.9,276.7 406.0,94.4 430.2,93.8 454.4,90.5 478.5,89.9" fill="none" stroke="#90353b" stroke-width="1"/>
<rect x="138.5" y="346.5" width="251.0" height="24.0" fill="#fff" stroke="#333" stroke-width="1"/>
<line x1="143.5" x2="193" y1="358.5" y2="358.5" stroke="#1a476f" stroke-width="1"/>
<text x="201.5" y="363" font-size="13.5" fill="#000">Control</text>
<line x1="264.3" x2="314.2" y1="358.5" y2="358.5" stroke="#90353b" stroke-width="1"/>
<text x="322.5" y="363" font-size="13.5" fill="#000">Treatment</text>
</svg></div>
</div>
</body></html>
